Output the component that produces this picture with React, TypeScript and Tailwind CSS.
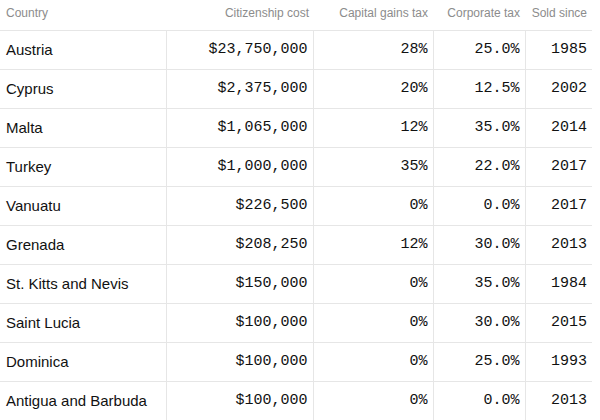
const rows = [
  ["Austria", "$23,750,000", "28%", "25.0%", "1985"],
  ["Cyprus", "$2,375,000", "20%", "12.5%", "2002"],
  ["Malta", "$1,065,000", "12%", "35.0%", "2014"],
  ["Turkey", "$1,000,000", "35%", "22.0%", "2017"],
  ["Vanuatu", "$226,500", "0%", "0.0%", "2017"],
  ["Grenada", "$208,250", "12%", "30.0%", "2013"],
  ["St. Kitts and Nevis", "$150,000", "0%", "35.0%", "1984"],
  ["Saint Lucia", "$100,000", "0%", "30.0%", "2015"],
  ["Dominica", "$100,000", "0%", "25.0%", "1993"],
  ["Antigua and Barbuda", "$100,000", "0%", "0.0%", "2013"],
];

const num = "text-right pr-[5px] pt-[1px] border-l border-[#e6e6e6] font-['Liberation_Mono'] text-[15px]";

export default function App() {
  return (
    <div className="w-[600px] h-[420px] bg-white overflow-hidden font-['Liberation_Sans']">
      <table className="w-[592px] table-fixed border-collapse">
        <colgroup>
          <col className="w-[166px]" />
          <col className="w-[147px]" />
          <col className="w-[120px]" />
          <col className="w-[92px]" />
          <col className="w-[67px]" />
        </colgroup>
        <thead>
          <tr className="h-[30px] border-b border-[#e6e6e6] text-[12px] text-[#8c8c8c]">
            <th className="font-normal text-left pl-[6px] pb-[4px]">Country</th>
            <th className="font-normal text-right pr-[4px] pb-[4px]">Citizenship cost</th>
            <th className="font-normal text-right pr-[5px] pb-[4px]">Capital gains tax</th>
            <th className="font-normal text-right pr-[5px] pb-[4px]">Corporate tax</th>
            <th className="font-normal text-right pr-[5px] pb-[4px]">Sold since</th>
          </tr>
        </thead>
        <tbody>
          {rows.map((r) => (
            <tr key={r[0]} className="h-[39px] border-b border-[#e6e6e6] text-[#111]">
              <td className="text-left pl-[6px] pt-[1px] text-[15px]">{r[0]}</td>
              <td className={num}>{r[1]}</td>
              <td className={num}>{r[2]}</td>
              <td className={num}>{r[3]}</td>
              <td className={num}>{r[4]}</td>
            </tr>
          ))}
        </tbody>
      </table>
    </div>
  );
}
